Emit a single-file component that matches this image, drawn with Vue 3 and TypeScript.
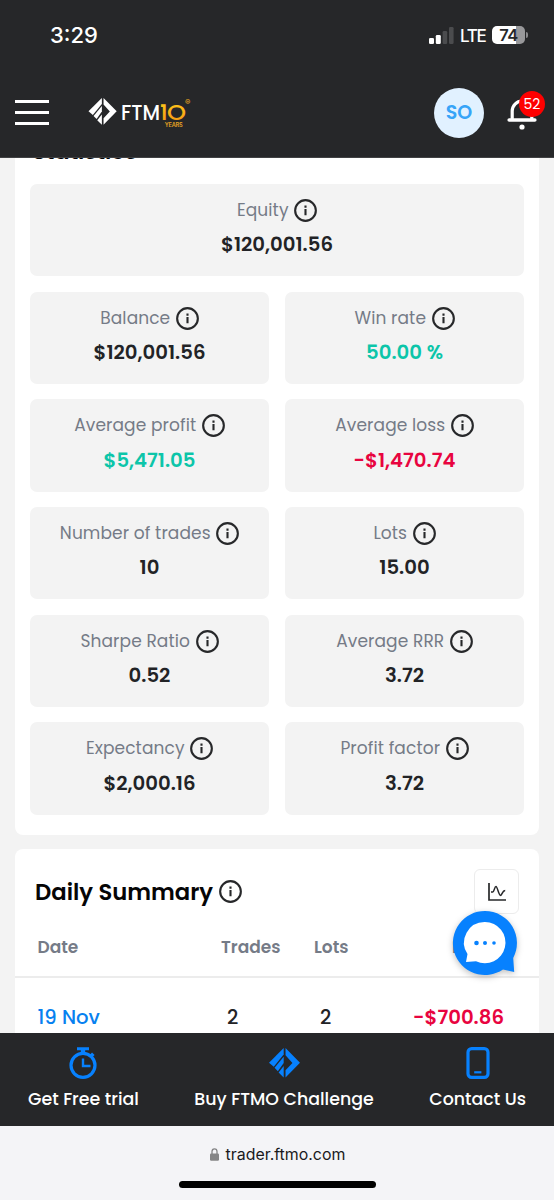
<script setup lang="ts">
interface Stat {
  label: string
  value: string
  tone?: 'up' | 'down'
  wide?: boolean
}

const stats: Stat[] = [
  { label: 'Equity', value: '$120,001.56', wide: true },
  { label: 'Balance', value: '$120,001.56' },
  { label: 'Win rate', value: '50.00 %', tone: 'up' },
  { label: 'Average profit', value: '$5,471.05', tone: 'up' },
  { label: 'Average loss', value: '-$1,470.74', tone: 'down' },
  { label: 'Number of trades', value: '10' },
  { label: 'Lots', value: '15.00' },
  { label: 'Sharpe Ratio', value: '0.52' },
  { label: 'Average RRR', value: '3.72' },
  { label: 'Expectancy', value: '$2,000.16' },
  { label: 'Profit factor', value: '3.72' },
]
</script>

<template>
  <div class="screen">
    <header class="top">
      <div class="status">
        <span class="time">3:29</span>
        <div class="indicators">
          <svg class="signal" width="25" height="17" viewBox="0 0 25 17">
            <rect x="0" y="11" width="5" height="6" rx="1.3" fill="#fff" />
            <rect x="6.8" y="8" width="5" height="9" rx="1.3" fill="#fff" />
            <rect x="13.6" y="4" width="4.6" height="13" rx="1.3" fill="#4b4c4e" />
            <rect x="20" y="0" width="4.6" height="17" rx="1.3" fill="#4b4c4e" />
          </svg>
          <span class="lte">LTE</span>
          <div class="battery"><span>74</span></div>
          <i class="tip"></i>
        </div>
      </div>
      <div class="bar">
        <div class="burger"><i></i><i></i><i></i></div>
        <svg class="brand" width="106" height="34" viewBox="0 0 106 34">
          <defs>
            <linearGradient id="gold" x1="0" y1="0" x2="0" y2="1">
              <stop offset="0" stop-color="#ffd21c" />
              <stop offset="1" stop-color="#f58f12" />
            </linearGradient>
          </defs>
          <g transform="translate(.5 2) scale(.94)" fill="#fff">
            <path d="M14.2 0V6.3L4.6 18.2 0 14.2Z" />
            <path d="M14.2 8.5V14.4L8.6 22.4 5.4 19.2Z" />
            <path d="M14.2 17.5V28.5L9.3 23.6Z" />
            <path d="M16 0 30 14.2 16 28.5V21.6L22.7 14.4 16 7Z" />
          </g>
          <text x="33" y="23.6" class="ftm" textLength="39" lengthAdjust="spacingAndGlyphs">FTM</text>
          <text x="72.2" y="23.6" class="ten" textLength="7" lengthAdjust="spacingAndGlyphs">1</text>
          <text x="79" y="23.8" class="zero" textLength="19" lengthAdjust="spacingAndGlyphs">O</text>
          <text x="76.7" y="31.2" class="years" textLength="18">YEARS</text>
          <text x="97" y="9" class="reg">®</text>
        </svg>
        <div class="account">
          <span class="avatar">SO</span>
          <div class="bell">
            <svg width="30" height="34" viewBox="0 0 30 34">
              <path d="M5.2 24V15a9.8 9.8 0 0 1 19.6 0V24" fill="none" stroke="#fff" stroke-width="3.2" />
              <path d="M2.2 24H27.8" stroke="#fff" stroke-width="3.6" stroke-linecap="round" />
              <circle cx="15" cy="31" r="2.6" fill="#fff" />
            </svg>
            <span class="count">52</span>
          </div>
        </div>
      </div>
    </header>

    <main>
      <section class="card stats">
        <h2>Statistics</h2>
        <div class="grid">
          <div v-for="s in stats" :key="s.label" class="tile" :class="{ wide: s.wide }">
            <div class="label">
              <span>{{ s.label }}</span>
              <svg class="info" viewBox="0 0 24 24">
                <circle cx="12" cy="12" r="10.8" />
                <path d="M12 10.4V17M12 6.8V9" />
              </svg>
            </div>
            <div class="value" :class="s.tone">{{ s.value }}</div>
          </div>
        </div>
      </section>

      <section class="card daily">
        <div class="title">
          <h2>Daily Summary</h2>
          <svg class="info" viewBox="0 0 24 24">
            <circle cx="12" cy="12" r="10.8" />
            <path d="M12 10.4V17M12 6.8V9" />
          </svg>
          <span class="chart">
            <svg width="18" height="18" viewBox="0 0 18 18" fill="none" stroke="#27282a">
              <path d="M1 0V17H18" stroke-width="1.7" />
              <path d="M3 9H4.8C6 9 6.6 3.6 8 3.6S10.8 12.4 12.4 12.4 14.2 7.6 17.2 7.6" stroke-width="1.5" />
            </svg>
          </span>
        </div>
        <div class="row head">
          <span>Date</span><span>Trades</span><span>Lots</span><span class="result">Result</span>
        </div>
        <div class="row">
          <span class="date">19 Nov</span><span class="num">2</span><span class="num">2</span><span class="loss">-$700.86</span>
        </div>
      </section>
      <svg class="chat" width="66" height="66" viewBox="0 0 66 66">
        <path d="M33 1a32 32 0 1 0 18 58.4L62.2 62 61.2 48A32 32 0 0 0 33 1Z" fill="#0781fe" />
        <path d="M33 12a20.6 20.6 0 1 1-9 39.2L14 52l1.5-8A20.6 20.6 0 0 1 33 12Z" fill="#fff" />
        <g fill="#0781fe">
          <circle cx="24.5" cy="33" r="2.3" /><circle cx="33" cy="33" r="2" /><circle cx="42" cy="33" r="1.8" />
        </g>
      </svg>
    </main>

    <nav>
      <a class="trial">
        <svg width="28" height="32" viewBox="0 0 28 32" fill="none" stroke="#0781fe">
          <circle cx="14" cy="18.3" r="12" stroke-width="3.2" />
          <path d="M8 1.8H20M22 6.6 24.6 9" stroke-width="3" />
          <path d="M14 2V6" stroke-width="4.4" />
          <path d="M14 11.5V19H21.5" stroke-width="2.4" />
        </svg>
        <span>Get Free trial</span>
      </a>
      <a class="buy">
        <svg width="31" height="32" viewBox="0 0 30 31" fill="#0781fe">
          <path d="M14.2 1V7.3L4.6 19.2 0 15.2Z" />
          <path d="M14.2 9.5V15.4L8.6 23.4 5.4 20.2Z" />
          <path d="M14.2 18.5V29.5L9.3 24.6Z" />
          <path d="M16 1 30 15.2 16 29.5V22.6L22.7 15.4 16 8Z" />
        </svg>
        <span>Buy FTMO Challenge</span>
      </a>
      <a class="contact">
        <svg width="24" height="32" viewBox="0 0 24 32" fill="none" stroke="#0781fe">
          <rect x="2" y="1.7" width="20" height="28.6" rx="3.6" stroke-width="3.2" />
          <path d="M8.2 25.3H15.4" stroke-width="2.2" />
        </svg>
        <span>Contact Us</span>
      </a>
    </nav>

    <footer>
      <div class="url">
        <svg width="9" height="13" viewBox="0 0 9 13">
          <path d="M2 6V3.6a2.5 2.7 0 0 1 5 0V6" fill="none" stroke="#858587" stroke-width="1.3" />
          <rect x="0" y="5.4" width="9" height="7.4" rx="1.2" fill="#858587" />
        </svg>
        <span>trader.ftmo.com</span>
      </div>
      <i class="home"></i>
    </footer>
  </div>
</template>

<style>
body {
  margin: 0;
}
</style>

<style scoped>
.screen {
  width: 554px;
  height: 1200px;
  display: flex;
  flex-direction: column;
  overflow: hidden;
  background: #f3f3f3;
  color: #222326;
  font-family: Poppins, Inter, 'Liberation Sans', sans-serif;
}
.top {
  flex: none;
  height: 157.5px;
  box-sizing: border-box;
  border-bottom: 1px solid #414244;
  background: #262729;
  color: #fff;
}
.status {
  height: 70px;
  display: flex;
  align-items: center;
  justify-content: space-between;
  padding: 0 26px 0 50px;
}
.time {
  font-family: Inter, sans-serif;
  font-size: 22px;
  font-weight: 500;
}
.indicators {
  display: flex;
  align-items: center;
  font-family: Inter, sans-serif;
}
.lte {
  margin: 1px 7px 0 6px;
  width: 25px;
  font-size: 17px;
  font-weight: 500;
  letter-spacing: -1.3px;
}
.battery {
  width: 33px;
  height: 18px;
  line-height: 18px;
  border-radius: 5px;
  background: linear-gradient(90deg, #fff 73%, #98989a 73%);
  color: #262729;
  text-align: center;
  font-size: 16.5px;
  font-weight: 600;
  letter-spacing: -0.6px;
}
.tip {
  width: 2px;
  height: 6px;
  margin-left: 1px;
  border-radius: 0 2px 2px 0;
  background: #8a8a8c;
}
.bar {
  height: 85px;
  display: flex;
  align-items: center;
  padding: 0 9px 0 15px;
}
.burger {
  display: grid;
  gap: 8.4px;
  width: 34px;
}
.burger i {
  height: 3px;
  background: #fff;
}
.brand {
  margin-left: 39px;
}
.ftm {
  font: 500 21px Poppins, Inter, sans-serif;
  fill: #fff;
}
.ten {
  font: 600 21px Poppins, Inter, sans-serif;
  fill: url(#gold);
}
.zero {
  font: 500 22px Poppins, Lato, sans-serif;
  fill: url(#gold);
}
.years {
  font: 600 5.6px Inter, sans-serif;
  fill: #e7a622;
}
.reg {
  font: 600 8px Inter, sans-serif;
  fill: #e7a622;
}
.account {
  margin-left: auto;
  display: flex;
  align-items: center;
  gap: 23px;
}
.avatar {
  width: 50px;
  height: 50px;
  line-height: 50px;
  border-radius: 50%;
  background: #e1f1ff;
  color: #37a4f8;
  text-align: center;
  font-size: 19px;
  font-weight: 600;
}
.bell {
  position: relative;
  width: 38px;
  height: 34px;
}
.count {
  position: absolute;
  left: 12px;
  top: -5px;
  width: 26px;
  height: 26px;
  line-height: 26px;
  border-radius: 50%;
  background: #fe0000;
  text-align: center;
  font-size: 14px;
}
main {
  flex: 1;
  min-height: 0;
  overflow: hidden;
  position: relative;
  padding: 0 15px;
}
.card {
  background: #fff;
  border-radius: 8px;
}
h2 {
  margin: 0;
  color: #050506;
  font-size: 22.7px;
  font-weight: 600;
  line-height: 30px;
}
.stats {
  display: flow-root;
  height: 677px;
  padding: 0 15px;
  border-radius: 0 0 8px 8px;
}
.stats h2 {
  margin: -22px 0 18.5px 2px;
  letter-spacing: -0.2px;
}
.grid {
  display: grid;
  grid-template-columns: 1fr 1fr;
  gap: 15.45px 16px;
}
.tile {
  height: 92.25px;
  box-sizing: border-box;
  padding-top: 15px;
  border-radius: 7px;
  background: #f3f3f3;
  text-align: center;
}
.wide {
  grid-column: 1 / 3;
}
.label {
  display: flex;
  justify-content: center;
  gap: 5.5px;
  height: 24px;
  line-height: 22px;
  color: #757b87;
  font-size: 17px;
  letter-spacing: 0.1px;
}
.info {
  width: 23px;
  height: 23px;
  fill: none;
  stroke: #27282a;
  stroke-width: 2.2;
}
.value {
  margin-top: 8.2px;
  line-height: 26px;
  font-size: 19.7px;
  font-weight: 600;
}
.up {
  color: #0cc5a9;
}
.down,
.loss {
  color: #e8043f;
}
.daily {
  height: 260px;
  margin-top: 14.5px;
}
.title {
  height: 84px;
  box-sizing: border-box;
  display: flex;
  align-items: center;
  gap: 6px;
  padding: 1px 20px 0;
}
.chart {
  margin-left: auto;
  width: 45px;
  height: 45px;
  box-sizing: border-box;
  display: grid;
  place-items: center;
  border: 1.5px solid #ececec;
  border-radius: 6px;
}
.row {
  display: grid;
  grid-template-columns: 183.5px 93px 70px 1fr;
  align-items: center;
  height: 79px;
  padding: 0 35px 0 22.5px;
  font-size: 19.6px;
  font-weight: 500;
}
.head {
  height: 27.5px;
  padding-bottom: 15px;
  border-bottom: 2px solid #ececec;
  color: #757b87;
  font-size: 17px;
  font-weight: 600;
}
.date {
  color: #0781f0;
}
.num {
  padding-left: 6px;
}
.result {
  padding-left: 68px;
}
.loss {
  text-align: right;
  font-size: 19.7px;
  font-weight: 600;
}
.chat {
  position: absolute;
  left: 452px;
  top: 752.5px;
  filter: drop-shadow(0 2px 3px rgba(0, 0, 0, 0.25));
}
nav {
  flex: none;
  height: 93px;
  box-sizing: border-box;
  display: flex;
  justify-content: space-between;
  padding: 14px 28px 0;
  background: #262729;
  color: #fff;
}
nav a {
  display: flex;
  flex-direction: column;
  align-items: center;
  gap: 7px;
  font-size: 17.4px;
  font-weight: 500;
  line-height: 26px;
}
footer {
  flex: none;
  height: 74px;
  box-sizing: border-box;
  padding-top: 17px;
  display: flex;
  flex-direction: column;
  align-items: center;
  background: #f4f4f7;
}
.url {
  display: flex;
  align-items: center;
  gap: 7px;
  height: 22px;
  margin-left: 1px;
  color: #1a1a1c;
  font-family: Inter, sans-serif;
  font-size: 15.9px;
}
.home {
  width: 197px;
  height: 7px;
  margin-top: 16px;
  border-radius: 4px;
  background: #000;
}
</style>
